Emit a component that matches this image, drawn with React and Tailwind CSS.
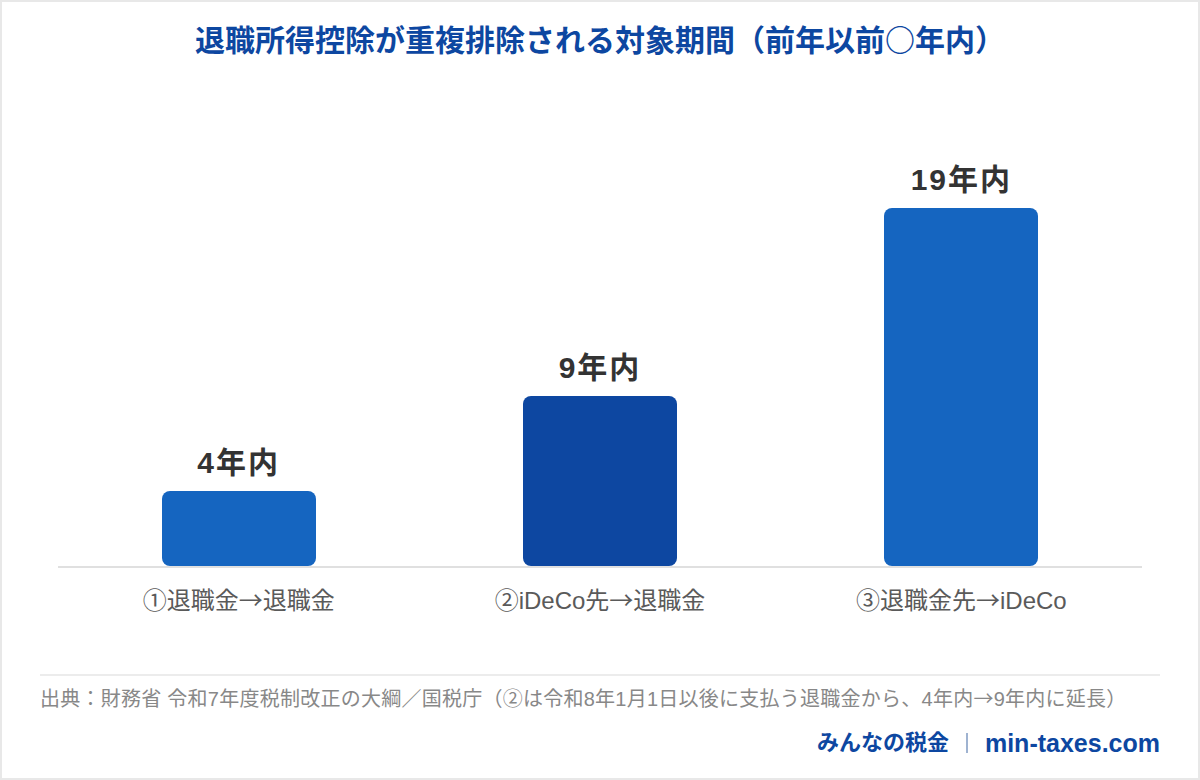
import React from 'react';

const bars = [
  { label: '4年内', years: 4, color: 'bg-[#1565c0]', cat: ['①退職金', '退職金'] },
  { label: '9年内', years: 9, color: 'bg-[#0d47a1]', cat: ['②iDeCo先', '退職金'] },
  { label: '19年内', years: 19, color: 'bg-[#1565c0]', cat: ['③退職金先', 'iDeCo'] },
];

const font = { fontFamily: '"Liberation Sans", "Noto Sans CJK JP", sans-serif' };
const cjk = { fontFamily: '"Noto Sans CJK JP", sans-serif' };

// full-width arrow, as the CJK font draws it
const Arrow = () => <span style={cjk}>→</span>;

export default function App() {
  return (
    <div
      className="box-border w-[1200px] h-[780px] bg-white border-2 border-[#e8e8e8] flex flex-col"
      style={font}
    >
      <h1 className="h-[56px] pt-[16px] text-center text-[30px] leading-[40px] font-bold text-[#0d47a1]">
        退職所得控除が重複排除される対象期間（前年以前<span style={cjk}>○</span>年内）
      </h1>

      {/* chart */}
      <div className="mx-[56px] h-[510px] grid grid-cols-3 items-end border-b-2 border-[#e0e0e0]">
        {bars.map((b) => (
          <div key={b.label} className="flex flex-col items-center">
            <div className="mb-[10px] text-[30px] leading-[36px] font-bold text-[#333333] tracking-[2px]">
              {b.label}
            </div>
            <div
              className={`w-[154px] rounded-lg ${b.color}`}
              style={{ height: `${b.years * 18.84}px` }}
            />
          </div>
        ))}
      </div>

      <div className="mx-[56px] mt-[15px] grid grid-cols-3">
        {bars.map((b) => (
          <div key={b.label} className="h-[32px] text-center text-[24px] leading-[32px] text-[#5a5a5a]">
            {b.cat[0]}<Arrow />{b.cat[1]}
          </div>
        ))}
      </div>

      {/* footer */}
      <div className="mx-[38px] mt-[59px] border-t-2 border-[#ececec]">
        <p className="h-[28px] mt-[8px] text-[20px] leading-[28px] tracking-[0.25px] text-[#888888]">
          出典：財務省 令和7年度税制改正の大綱／国税庁（②は令和8年1月1日以後に支払う退職金から、4年内<Arrow />9年内に延長）
        </p>
        <div className="h-[30px] mt-[16px] flex items-center justify-end gap-[17px] leading-[30px] font-bold text-[#0d47a1]">
          <span className="text-[22px]">みんなの税金</span>
          <span className="w-[2px] h-[20px] bg-[#9fb3d1]" />
          <span className="text-[25px]">min-taxes.com</span>
        </div>
      </div>
    </div>
  );
}
